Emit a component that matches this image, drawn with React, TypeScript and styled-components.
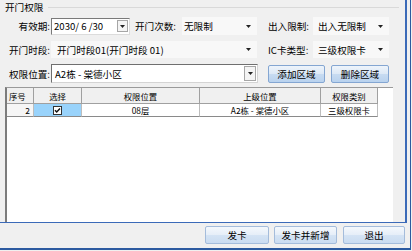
import React from 'react'
import styled, { createGlobalStyle } from 'styled-components'

const GlobalStyle = createGlobalStyle`
  html, body {
    margin: 0;
    padding: 0;
    background: #f0f0f0;
  }
  body {
    font-family: "Noto Sans CJK SC", "Noto Sans", sans-serif;
    font-size: 9.6px;
    color: #000;
  }
`

const BLUE = '#3b6ab8'

const Window = styled.div`
  width: 411px;
  height: 250px;
  box-sizing: border-box;
  border-right: 1px solid #2c5aa0;
  border-bottom: 2px solid #2c5aa0;
  display: flex;
  flex-direction: column;
  overflow: hidden;
`

const MainPanel = styled.div`
  width: 407px;
  height: 223px;
  box-sizing: border-box;
  border-right: 2px solid ${BLUE};
  border-bottom: 1px solid ${BLUE};
  display: flex;
  flex-direction: column;
`

const GroupHeader = styled.div`
  height: 14px;
  display: flex;
  align-items: center;
  padding-left: 5px;
  gap: 5px;
  margin-right: 6px;
`

const GroupTitle = styled.span`
  line-height: 14px;
`

const GroupLine = styled.div`
  flex: 1;
  height: 1px;
  background: #d9d9d9;
`

const FormRow = styled.div<{ $h: number; $top: number }>`
  display: flex;
  align-items: center;
  height: ${(p) => p.$h}px;
  margin-top: ${(p) => p.$top}px;
`

const Label = styled.div<{ $w: number; $ml?: number; $left?: boolean }>`
  width: ${(p) => p.$w}px;
  margin-left: ${(p) => p.$ml ?? 0}px;
  text-align: ${(p) => (p.$left ? 'left' : 'right')};
  white-space: nowrap;
  flex-shrink: 0;
  padding-right: 1px;
  box-sizing: border-box;
`

const DateBox = styled.div`
  width: 79px;
  height: 17px;
  box-sizing: border-box;
  background: #fff;
  border: 1px solid;
  border-color: #7a7a7a #dcdcdc #dcdcdc #7a7a7a;
  display: flex;
  align-items: center;
  padding-left: 2px;
  justify-content: space-between;
  flex-shrink: 0;
`

const DropButton = styled.div<{ $w?: number; $h?: number }>`
  width: ${(p) => p.$w ?? 11}px;
  height: ${(p) => p.$h ?? 12}px;
  box-sizing: border-box;
  border: 1px solid #a6a6a6;
  background: #f4f4f4;
  display: flex;
  align-items: center;
  justify-content: center;
  margin-right: 1px;
`

const FlatCombo = styled.div<{ $w: number; $ml?: number; $pl?: number }>`
  width: ${(p) => p.$w}px;
  height: 100%;
  margin-left: ${(p) => p.$ml ?? 0}px;
  padding-left: ${(p) => p.$pl ?? 5}px;
  padding-right: 6px;
  box-sizing: border-box;
  background: #f8f8f8;
  display: flex;
  align-items: center;
  justify-content: space-between;
  white-space: nowrap;
  flex-shrink: 0;
`

const WhiteCombo = styled.div`
  width: 207px;
  height: 19px;
  box-sizing: border-box;
  background: #fff;
  border: 1px solid;
  border-color: #6f6f6f #d4d4d4 #d4d4d4 #6f6f6f;
  display: flex;
  align-items: center;
  justify-content: space-between;
  padding-left: 3px;
  flex-shrink: 0;
`

const Button = styled.button<{ $w: number; $ml?: number }>`
  width: ${(p) => p.$w}px;
  height: 18px;
  margin: 0 0 0 ${(p) => p.$ml ?? 0}px;
  padding: 0;
  box-sizing: border-box;
  border: 1px solid #84a6d2;
  border-radius: 2px;
  background: linear-gradient(#eef4fb 0%, #dde9f6 48%, #c7dbf1 52%, #b9d2ee 100%);
  font-family: inherit;
  font-size: 9.6px;
  color: #000;
  display: flex;
  align-items: center;
  justify-content: center;
  flex-shrink: 0;
`

const FooterButton = styled(Button)`
  border-color: #a4bcdb;
  background: linear-gradient(#f4f8fc 0%, #e6eef8 48%, #d4e3f4 52%, #cadcf1 100%);
`

const GridBox = styled.div`
  margin: 4px 0 0 5px;
  width: 388px;
  flex: 1;
  box-sizing: border-box;
  background: #fff;
  border-top: 1px solid #9a9a9a;
  border-left: 2px solid #7c7c7c;
  font-size: 8.4px;
`

const GridRow = styled.div<{ $h: number }>`
  display: flex;
  height: ${(p) => p.$h}px;
`

const HeaderCell = styled.div<{ $w: number; $align?: string }>`
  width: ${(p) => p.$w}px;
  box-sizing: border-box;
  background: #f0f0f0;
  border-right: 1px solid #a0a0a0;
  border-bottom: 1px solid #a0a0a0;
  display: flex;
  align-items: center;
  justify-content: ${(p) => p.$align ?? 'center'};
  padding: 0 2px;
  white-space: nowrap;
`

const Cell = styled.div<{ $w: number; $align?: string; $bg?: string }>`
  width: ${(p) => p.$w}px;
  box-sizing: border-box;
  background: ${(p) => p.$bg ?? '#fff'};
  border-right: 1px solid #bdbdbd;
  border-bottom: 1px solid #8a8a8a;
  display: flex;
  align-items: center;
  justify-content: ${(p) => p.$align ?? 'center'};
  padding: 0 3px;
  white-space: nowrap;
`

const Footer = styled.div`
  flex: 1;
  display: flex;
  justify-content: flex-end;
  align-items: flex-start;
  padding: 3px 5px 0 0;
  gap: 5px;
`

const Arrow = () => (
  <svg width="5" height="3" viewBox="0 0 5 3">
    <path d="M0 0H5L2.5 3Z" fill="#222" />
  </svg>
)

const Check = () => (
  <svg width="9" height="9" viewBox="0 0 9 9">
    <rect x="0.5" y="0.5" width="8" height="8" fill="#fff" stroke="#333" />
    <path d="M2 4.3L3.7 6L7 2.6" fill="none" stroke="#111" strokeWidth="1.5" />
  </svg>
)

const COLUMNS = [
  { title: '序号', w: 27, align: 'flex-start' },
  { title: '选择', w: 48 },
  { title: '权限位置', w: 118 },
  { title: '上级位置', w: 121 },
  { title: '权限类别', w: 57 },
]

export default function App() {
  return (
    <>
      <GlobalStyle />
      <Window>
        <MainPanel>
          <GroupHeader>
            <GroupTitle>开门权限</GroupTitle>
            <GroupLine />
          </GroupHeader>

          <FormRow $h={18} $top={3}>
            <Label $w={51}>有效期:</Label>
            <DateBox>
              <span>2030/ 6 /30</span>
              <DropButton>
                <Arrow />
              </DropButton>
            </DateBox>
            <Label $w={47} $ml={5} $left>开门次数:</Label>
            <FlatCombo $w={75} $pl={2}>
              <span>无限制</span>
              <Arrow />
            </FlatCombo>
            <Label $w={45} $ml={11} $left>出入限制:</Label>
            <FlatCombo $w={76}>
              <span>出入无限制</span>
              <Arrow />
            </FlatCombo>
          </FormRow>

          <FormRow $h={17} $top={6}>
            <Label $w={51}>开门时段:</Label>
            <FlatCombo $w={206} $pl={6}>
              <span>开门时段01(开门时段 01)</span>
              <Arrow />
            </FlatCombo>
            <Label $w={45} $ml={11} $left>IC卡类型:</Label>
            <FlatCombo $w={76}>
              <span>三级权限卡</span>
              <Arrow />
            </FlatCombo>
          </FormRow>

          <FormRow $h={19} $top={6}>
            <Label $w={51}>权限位置:</Label>
            <WhiteCombo>
              <span>A2栋 - 棠德小区</span>
              <DropButton $w={12} $h={15}>
                <Arrow />
              </DropButton>
            </WhiteCombo>
            <Button $w={57} $ml={10}>添加区域</Button>
            <Button $w={58} $ml={6}>删除区域</Button>
          </FormRow>

          <GridBox>
            <GridRow $h={16}>
              {COLUMNS.map((c) => (
                <HeaderCell key={c.title} $w={c.w} $align={c.align}>
                  {c.title}
                </HeaderCell>
              ))}
            </GridRow>
            <GridRow $h={13}>
              <Cell $w={27} $align="flex-end" $bg="#f6f6f6">2</Cell>
              <Cell $w={48} $bg="#99d3fb">
                <Check />
              </Cell>
              <Cell $w={118}>08层</Cell>
              <Cell $w={121}>A2栋 - 棠德小区</Cell>
              <Cell $w={57}>三级权限卡</Cell>
            </GridRow>
          </GridBox>
        </MainPanel>

        <Footer>
          <FooterButton $w={64}>发卡</FooterButton>
          <FooterButton $w={63}>发卡并新增</FooterButton>
          <FooterButton $w={62} $ml={1}>退出</FooterButton>
        </Footer>
      </Window>
    </>
  )
}
